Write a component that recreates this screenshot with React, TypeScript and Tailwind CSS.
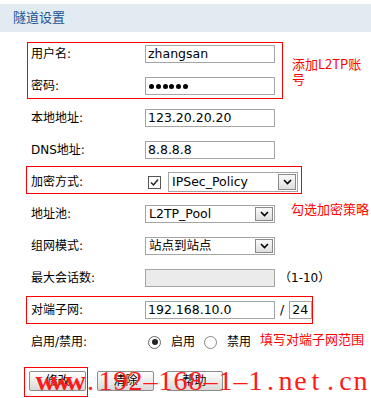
import React from "react";

const Chevron = () => (
  <svg width="9" height="6" viewBox="0 0 9 6">
    <path d="M1 1 L4.5 4.5 L8 1" fill="none" stroke="#000" strokeWidth="1.6" />
  </svg>
);

function Select({ text, w, h }: { text: string; w: string; h: string }) {
  return (
    <div className={`${w} ${h} flex items-stretch border border-[#a5a5a5] bg-white`}>
      <div className="flex-1 flex items-center pl-[3px] text-[12.5px] text-black leading-none">{text}</div>
      <div className="w-[18px] m-[1px] flex items-center justify-center border border-[#8a8a8a] bg-gradient-to-b from-[#fafafa] to-[#dedede]">
        <Chevron />
      </div>
    </div>
  );
}

function Input({ children, w = "w-[130px]", disabled = false }: { children?: React.ReactNode; w?: string; disabled?: boolean }) {
  return (
    <div
      className={`${w} h-[18px] flex items-center pl-[2px] border border-[#a5a5a5] text-[12.5px] text-black leading-none ${
        disabled ? "bg-[#ebebeb]" : "bg-white"
      }`}
    >
      {children}
    </div>
  );
}

function Row({ label, children }: { label: string; children?: React.ReactNode }) {
  return (
    <div className="h-[32px] flex items-center">
      <div className="w-[114px] text-[12px] text-black">{label}</div>
      {children}
    </div>
  );
}

function Btn({ text }: { text: string }) {
  return (
    <div className="w-[57px] h-[20px] flex items-center justify-center border border-[#8c8c8c] rounded-[2px] bg-gradient-to-b from-[#ffffff] to-[#d9d9d9] text-[12px] text-black">
      {text}
    </div>
  );
}

const WM = "www.192-168-1-1.net.cn";

export default function App() {
  return (
    <div className="relative w-[371px] h-[398px] bg-white overflow-hidden font-['DejaVu_Sans','Noto_Sans_CJK_SC',sans-serif]">
      <div className="h-[4px]" />
      <div className="h-[28px] bg-[#e3ebf2] flex items-center pl-[13px] text-[13px] text-[#1b5494]">隧道设置</div>
      <div className="h-[6px]" />
      <div className="pl-[31px]">
        <Row label="用户名:">
          <Input>zhangsan</Input>
        </Row>
        <Row label="密码:">
          <Input>
            <div className="flex gap-[1.8px] pl-[1px]">
              {[0, 1, 2, 3, 4, 5].map((i) => (
                <span key={i} className="w-[5px] h-[5px] rounded-full bg-black" />
              ))}
            </div>
          </Input>
        </Row>
        <Row label="本地地址:">
          <Input>123.20.20.20</Input>
        </Row>
        <Row label="DNS地址:">
          <Input>8.8.8.8</Input>
        </Row>
        <Row label="加密方式:">
          <div className="ml-[3px] w-[13px] h-[13px] border border-[#555] bg-white flex items-center justify-center">
            <svg width="9" height="9" viewBox="0 0 9 9">
              <path d="M1 4.5 L3.5 7 L8 1.5" fill="none" stroke="#222" strokeWidth="1.5" />
            </svg>
          </div>
          <div className="ml-[7px]">
            <Select text="IPSec_Policy" w="w-[130px]" h="h-[20px]" />
          </div>
        </Row>
        <Row label="地址池:">
          <Select text="L2TP_Pool" w="w-[130px]" h="h-[18px]" />
        </Row>
        <Row label="组网模式:">
          <Select text="站点到站点" w="w-[130px]" h="h-[18px]" />
        </Row>
        <Row label="最大会话数:">
          <Input disabled />
          <span className="ml-[4px] text-[12px] text-black">（1-10）</span>
        </Row>
        <Row label="对端子网:">
          <Input>192.168.10.0</Input>
          <span className="ml-[5px] mr-[5px] text-[12.5px] text-black">/</span>
          <Input w="w-[23px]">24</Input>
        </Row>
        <Row label="启用/禁用:">
          <div className="ml-[3px] w-[13px] h-[13px] rounded-full border border-[#666] bg-white flex items-center justify-center">
            <span className="w-[6px] h-[6px] rounded-full bg-[#222]" />
          </div>
          <span className="ml-[10px] text-[12px] text-black">启用</span>
          <div className="ml-[9px] w-[13px] h-[13px] rounded-full border border-[#888] bg-white" />
          <span className="ml-[10px] text-[12px] text-black">禁用</span>
        </Row>
      </div>
      <div className="mt-[13px] pl-[29px] flex">
        <Btn text="修改" />
        <div className="ml-[11px]">
          <Btn text="清除" />
        </div>
        <div className="ml-[12px]">
          <Btn text="帮助" />
        </div>
      </div>

      {/* annotation boxes */}
      <div className="absolute left-[27px] top-[42px] w-[256px] h-[57px] border border-[#ff0000]" />
      <div className="absolute left-[26px] top-[166px] w-[276px] h-[28px] border border-[#ff0000]" />
      <div className="absolute left-[26px] top-[296px] w-[287px] h-[28px] border border-[#ff0000]" />
      <div className="absolute left-[24px] top-[367px] w-[64px] h-[30px] border border-[#ff0000]" />

      <div className="absolute left-[292px] top-[56px] text-[13px] leading-[15px] text-[#ff0000] font-['Noto_Sans_CJK_SC',sans-serif]">
        添加L2TP账
        <br />号
      </div>
      <div className="absolute left-[291px] top-[201px] text-[13px] leading-[15px] text-[#ff0000] font-['Noto_Sans_CJK_SC',sans-serif]">
        勾选加密策略
      </div>
      <div className="absolute left-[260px] top-[331px] text-[13px] leading-[15px] text-[#ff0000] font-['Noto_Sans_CJK_SC',sans-serif] whitespace-nowrap">
        填写对端子网范围
      </div>

      {/* watermark */}
      <div className="absolute left-[38px] top-[367px] flex text-[28px] leading-none text-[#ff1a1a] font-['Liberation_Serif',serif]">
        {WM.split("").map((c, i) => (
          <span key={i} className={`w-[15px] flex justify-center ${i < 3 ? "font-bold" : ""}`}>
            {c === "-" ? "–" : c}
          </span>
        ))}
      </div>
    </div>
  );
}
